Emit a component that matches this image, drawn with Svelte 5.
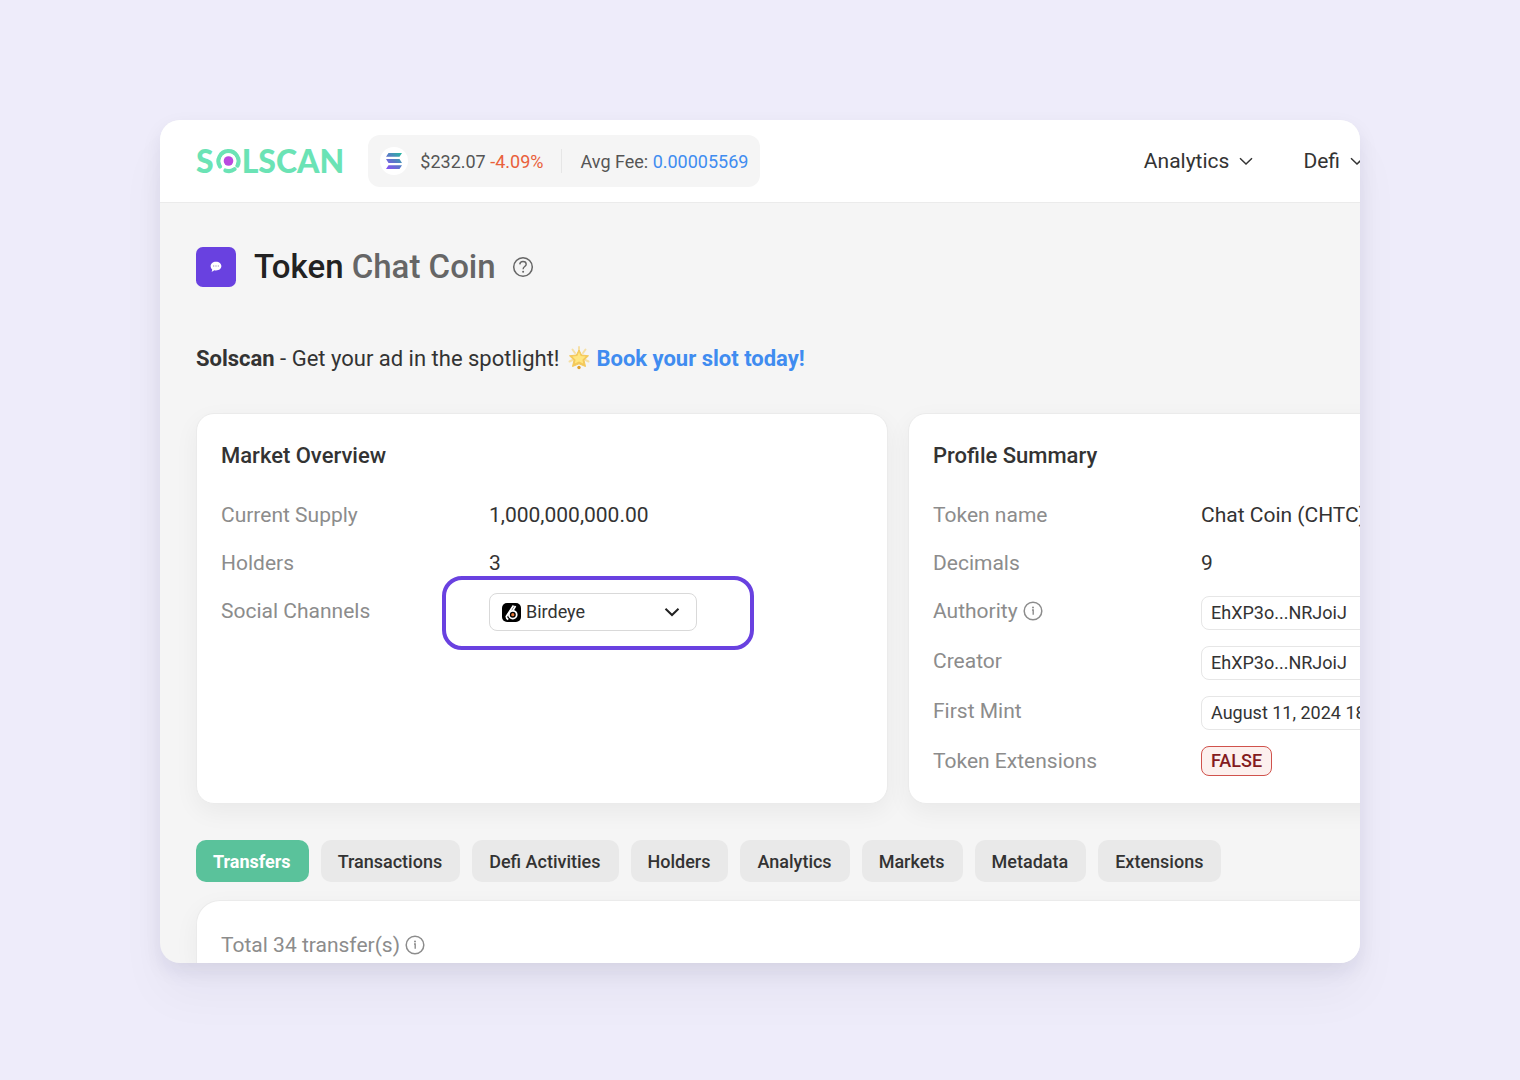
<script>
	const nav = ['Analytics', 'Defi']

	const tabs = [
		'Transfers',
		'Transactions',
		'Defi Activities',
		'Holders',
		'Analytics',
		'Markets',
		'Metadata',
		'Extensions'
	]

	const profile = [
		{ label: 'Token name', value: 'Chat Coin (CHTC)', type: 'plain' },
		{ label: 'Decimals', value: '9', type: 'plain' },
		{ label: 'Authority', value: 'EhXP3o...NRJoiJ', type: 'box', info: true },
		{ label: 'Creator', value: 'EhXP3o...NRJoiJ', type: 'box' },
		{ label: 'First Mint', value: 'August 11, 2024 18', type: 'box' },
		{ label: 'Token Extensions', value: 'FALSE', type: 'badge' }
	]

	let active = $state('Transfers')
	let channel = $state('Birdeye')
</script>

{#snippet chevron()}
	<svg class="chevron" width="14" height="14" viewBox="0 0 14 14" aria-hidden="true">
		<path d="M1 4.300 7 10l6-5.700" fill="none" stroke="currentColor" stroke-width="1.500" />
	</svg>
{/snippet}

{#snippet info()}
	<svg class="info" width="20" height="20" viewBox="0 0 20 20" aria-hidden="true">
		<circle cx="10" cy="10" r="8.800" fill="none" stroke="currentColor" stroke-width="1.500" />
		<circle cx="10" cy="6.400" r="1" fill="currentColor" />
		<path d="M9 9h1.200v4.800" fill="none" stroke="currentColor" stroke-width="1.400" />
	</svg>
{/snippet}

<div class="page">
	<div class="window">
		<header>
			<a class="logo" href="#home" aria-label="Solscan">
				<span>S</span>
				<svg width="25" height="26" viewBox="0 0 25 26" aria-hidden="true">
					<path d="M4 18.500A10 10 0 1 1 21.500 17.500" fill="none" stroke="#6be3b5" stroke-width="4.200" stroke-linecap="round" />
					<path d="M9.500 22.500c3 1 6.500.6 9-1.300" fill="none" stroke="#6be3b5" stroke-width="4.200" stroke-linecap="round" />
					<circle cx="12.500" cy="13" r="7.800" fill="#fff" />
					<circle cx="12.500" cy="13" r="4.800" fill="#b94ae0" />
				</svg>
				<span>LSCAN</span>
			</a>

			<div class="stats">
				<span class="coin">
					<svg width="18" height="16" viewBox="0 0 18 16" aria-hidden="true">
						<defs>
							<linearGradient id="sol" gradientUnits="userSpaceOnUse" x1="2" y1="16" x2="16" y2="0">
								<stop offset="0" stop-color="#8752f3" />
								<stop offset="0.500" stop-color="#5a78c8" />
								<stop offset="1" stop-color="#28b8a0" />
							</linearGradient>
						</defs>
						<path d="M3.500 0h13.500l-2.500 3.800H1zM1 6.100h13.500l2.500 3.800H3.500zM3.500 12.200h13.500l-2.500 3.800H1z" fill="url(#sol)" />
					</svg>
				</span>
				<span>$232.07 <span class="down">-4.09%</span></span>
				<span class="divider"></span>
				<span>Avg Fee: <a href="#fee">0.00005569</a></span>
			</div>

			<nav>
				{#each nav as item}
					<button>{item} {@render chevron()}</button>
				{/each}
			</nav>
		</header>

		<main>
			<div class="title">
				<svg width="40" height="40" viewBox="0 0 41 41" aria-hidden="true">
					<rect width="41" height="41" rx="7" fill="#6941e0" />
					<path d="M20.500 15c3.300 0 5.500 1.900 5.500 4.500s-2.200 4.500-5.500 4.500c-.7 0-1.300 0-1.900-.2-.6.800-1.600 1.300-2.800 1.400.6-.6.800-1.400.8-2.200-1-.9-1.600-2-1.600-3.500 0-2.600 2.200-4.500 5.500-4.500z" fill="#fff" />
					<path d="M17.500 19.500h1.200m1.200 0h1.200m1.200 0h1.200" stroke="#9a8ab8" stroke-width="1.200" />
				</svg>
				<h1>Token <span>Chat Coin</span></h1>
				<svg class="help" width="22" height="22" viewBox="0 0 22 22" aria-hidden="true">
					<circle cx="11" cy="11" r="9.300" fill="none" stroke="currentColor" stroke-width="1.500" />
					<path d="M7.800 8.400c.1-1.800 1.400-2.900 3.200-2.900s3.200 1.100 3.200 2.700c0 2.300-3.100 2.400-3.100 5" fill="none" stroke="currentColor" stroke-width="1.400" />
					<circle cx="11.100" cy="15.800" r="1" fill="currentColor" />
				</svg>
			</div>

			<p class="ad">
				<b>Solscan</b> - Get your ad in the spotlight!
				<svg width="22" height="24" viewBox="0 0 22 24" aria-hidden="true">
					<path d="M4.500 3.500 7 7M17.500 3.500 15 7M1.500 15.500l3-1.500M20.500 15.500l-3-1.500M11 1v4" stroke="#f5dfa5" stroke-width="2" stroke-linecap="round" />
					<path d="m11 4 2.600 5 6.900.8-4.500 4.400 1.500 6.300-6.500-2.700-6.500 2.700L6 14.200 1.500 9.800l6.900-.8z" fill="#f4c95a" stroke="#f4c95a" stroke-linejoin="round" />
					<path d="m11 6 1.700 4 5 .6-3.300 3.200.8 3.600L11 15.600l-4.200 1.800.8-3.600L4.300 10.600l5-.6z" fill="#ffe680" />
					<circle cx="11" cy="21.500" r="1.700" fill="#e0a02c" />
				</svg>
				<a href="#book">Book your slot today!</a>
			</p>

			<div class="cards">
				<section class="card">
					<h2>Market Overview</h2>
					<dl>
						<div class="row">
							<dt>Current Supply</dt>
							<dd>1,000,000,000.00</dd>
						</div>
						<div class="row">
							<dt>Holders</dt>
							<dd>3</dd>
						</div>
						<div class="row">
							<dt><label for="channel">Social Channels</label></dt>
							<dd>
								<div class="picker">
									<svg class="bird" width="19" height="19" viewBox="0 0 19 19" aria-hidden="true">
										<rect width="19" height="19" rx="5" fill="#000" />
										<path d="M11.500 2.500 4.300 13.500c0 1.500.7 2.300 2 3" fill="none" stroke="#fff" stroke-width="1.800" />
										<path d="m13.500 3-3.300 5.500" stroke="#fff" stroke-width="1.800" />
										<circle cx="10.800" cy="11.700" r="3.900" fill="#000" stroke="#fff" stroke-width="1.800" />
										<circle cx="10.800" cy="11.700" r="1.600" fill="#e8793a" />
									</svg>
									<select id="channel" bind:value={channel}>
										<option>Birdeye</option>
									</select>
									<svg class="arrow" width="16" height="16" viewBox="0 0 16 16" aria-hidden="true">
										<path d="m1.500 4.800 6.500 6.200 6.500-6.200" fill="none" stroke="#222" stroke-width="2" />
									</svg>
									<span class="highlight"></span>
								</div>
							</dd>
						</div>
					</dl>
				</section>

				<section class="card">
					<h2>Profile Summary</h2>
					<dl>
						{#each profile as row}
							<div class="row">
								<dt>{row.label} {#if row.info}{@render info()}{/if}</dt>
								<dd><span class={row.type}>{row.value}</span></dd>
							</div>
						{/each}
					</dl>
				</section>
			</div>

			<div class="tabs">
				{#each tabs as tab}
					<button class:active={active === tab} onclick={() => (active = tab)}>{tab}</button>
				{/each}
			</div>

			<section class="card transfers">
				<p>Total 34 transfer(s) {@render info()}</p>
			</section>
		</main>
	</div>
</div>

<style>
	:global(body) {
		background: #eeecfa;
	}

	.page {
		padding: 120px 160px 100px;
	}

	.window {
		overflow: hidden;
		border-radius: 20px;
		background: #f5f5f5;
		box-shadow: 0 8px 20px rgba(30, 20, 60, 0.08), 0 32px 48px rgba(30, 20, 60, 0.04);
		font-family: Roboto, "Liberation Sans", sans-serif;
		font-size: 21px;
		color: #333;
	}

	button,
	select {
		font: inherit;
		color: inherit;
		border: 0;
		cursor: pointer;
	}

	a {
		color: #408cf0;
		text-decoration: none;
	}

	header {
		display: flex;
		align-items: center;
		height: 82px;
		padding-left: 36px;
		background: #fff;
		border-bottom: 1px solid #ebebeb;
	}

	.logo {
		display: flex;
		align-items: center;
		margin-right: 24px;
		font-family: Lato, sans-serif;
		font-size: 32px;
		font-weight: 900;
		line-height: 36px;
		color: #6be3b5;
	}

	.logo svg {
		margin: 0 1px 0 2px;
	}

	.stats {
		display: flex;
		align-items: center;
		height: 52px;
		padding: 0 12px;
		box-sizing: border-box;
		border-radius: 12px;
		background: #f5f5f5;
		font-size: 18px;
		color: #555;
		white-space: nowrap;
	}

	.coin {
		display: flex;
		align-items: center;
		justify-content: center;
		width: 28px;
		height: 28px;
		margin-right: 12px;
		border-radius: 50%;
		background: #fff;
	}

	.down {
		color: #e9603a;
	}

	.divider {
		width: 1px;
		height: 24px;
		margin: 0 18px;
		background: #e6e6e6;
	}

	nav {
		display: flex;
		gap: 50px;
		margin-left: auto;
		margin-right: -4px;
	}

	nav button {
		display: flex;
		align-items: center;
		gap: 10px;
		padding: 0;
		background: none;
	}

	/* wider than the window, the right side runs out of view */
	main {
		width: calc(100% + 275px);
		box-sizing: border-box;
		padding: 43px 35px 0 36px;
	}

	.title {
		display: flex;
		align-items: center;
		height: 42px;
	}

	h1 {
		margin: 0 16px 0 18px;
		font-size: 33px;
		font-weight: 500;
		line-height: 40px;
		color: #222;
	}

	h1 span,
	.help {
		color: #666;
	}

	.ad {
		margin: 56px 0 39px;
		font-size: 22px;
		line-height: 30px;
	}

	.ad svg {
		margin: 0 1px 0 3px;
		vertical-align: -4px;
	}

	.ad a {
		font-weight: 700;
	}

	.cards {
		display: grid;
		grid-template-columns: 1fr 1fr;
		gap: 20px;
	}

	.card {
		padding: 29px 24px 25px;
		border: 1px solid #ebebeb;
		border-radius: 18px;
		background: #fff;
		box-shadow: 0 8px 24px rgba(0, 0, 0, 0.05);
	}

	h2 {
		margin: 0 0 31px;
		font-size: 22px;
		font-weight: 500;
		line-height: 26px;
	}

	dl {
		display: flex;
		flex-direction: column;
		gap: 16px;
		margin: 0;
	}

	.row {
		display: grid;
		grid-template-columns: 268px 1fr;
		align-items: start;
		min-height: 32px;
		line-height: 30px;
	}

	dt,
	.transfers p {
		color: #8c8c8c;
	}

	dd {
		display: flex;
		margin: 0;
		white-space: nowrap;
	}

	.info {
		vertical-align: -3px;
	}

	.box,
	.badge {
		padding: 0 9px;
		border: 1px solid #e6e6e6;
		border-radius: 8px;
		font-size: 18px;
	}

	.box {
		width: 240px;
		line-height: 32px;
	}

	.badge {
		border-color: #d0524c;
		background: #fcf0ee;
		font-weight: 500;
		line-height: 28px;
		color: #841c1f;
	}

	.picker {
		position: relative;
		display: flex;
		margin-top: -3px;
	}

	.picker select {
		appearance: none;
		width: 208px;
		height: 38px;
		padding: 0 36px;
		border: 1px solid #d9d9d9;
		border-radius: 8px;
		background: #fff;
		font-size: 18px;
	}

	.bird,
	.arrow {
		position: absolute;
		top: 10px;
		left: 13px;
		pointer-events: none;
	}

	.arrow {
		top: 11px;
		right: 17px;
		left: auto;
	}

	.highlight {
		position: absolute;
		inset: -17px -57px -19px -47px;
		border: 4px solid #6941e0;
		border-radius: 20px;
		pointer-events: none;
	}

	.tabs {
		display: flex;
		gap: 12px;
		margin: 36px 0 18px;
	}

	.tabs button {
		height: 42px;
		padding: 0 18px 0 17px;
		border-radius: 10px;
		background: #e9e9e9;
		font-size: 18px;
		font-weight: 500;
	}

	.tabs .active {
		background: #5ac29b;
		font-weight: 700;
		color: #fff;
	}

	.transfers {
		padding: 29px 24px 3px;
		border-bottom: 0;
		border-radius: 24px 24px 0 0;
	}

	.transfers p {
		margin: 0;
		line-height: 30px;
	}
</style>
